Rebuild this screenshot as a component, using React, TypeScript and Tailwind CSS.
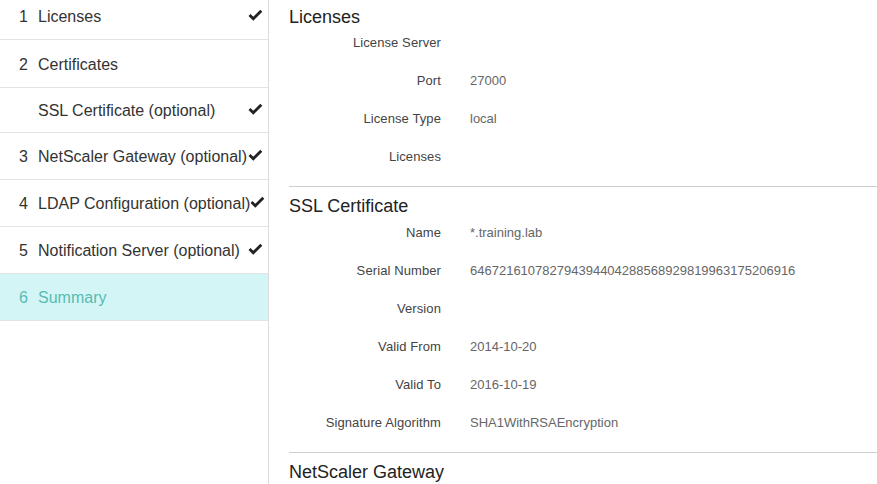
import React from 'react';

type Step = { num?: string; label: string; done?: boolean; active?: boolean; h: string };

const steps: Step[] = [
  { num: '1', label: 'Licenses', done: true, h: 'h-[47px]' },
  { num: '2', label: 'Certificates', h: 'h-[48px]' },
  { label: 'SSL Certificate (optional)', done: true, h: 'h-[45px]' },
  { num: '3', label: 'NetScaler Gateway (optional)', done: true, h: 'h-[47px]' },
  { num: '4', label: 'LDAP Configuration (optional)', done: true, h: 'h-[47px]' },
  { num: '5', label: 'Notification Server (optional)', done: true, h: 'h-[47px]' },
  { num: '6', label: 'Summary', active: true, h: 'h-[47px]' },
];

const licenses: [string, string][] = [
  ['License Server', ''],
  ['Port', '27000'],
  ['License Type', 'local'],
  ['Licenses', ''],
];

const ssl: [string, string][] = [
  ['Name', '*.training.lab'],
  ['Serial Number', '646721610782794394404288568929819963175206916'],
  ['Version', ''],
  ['Valid From', '2014-10-20'],
  ['Valid To', '2016-10-19'],
  ['Signature Algorithm', 'SHA1WithRSAEncryption'],
];

const Check = () => (
  <svg width="15" height="12" viewBox="0 0 15 12" className="shrink-0 -mt-[4px]">
    <path d="M1.5 6 L5.3 9.8 L13.3 1.8" fill="none" stroke="#222" strokeWidth="2.8" />
  </svg>
);

const Rows = ({ rows }: { rows: [string, string][] }) => (
  <div>
    {rows.map(([k, v]) => (
      <div key={k} className="flex h-[38px] pt-[5px] text-[13px] leading-[18px]">
        <div className="w-[152px] shrink-0 text-right text-[#444] tracking-[0.1px]">{k}</div>
        <div className="ml-[29px] text-[#666] whitespace-nowrap">{v}</div>
      </div>
    ))}
  </div>
);

export default function App() {
  return (
    <div
      className="flex h-[484px] w-[877px] overflow-hidden bg-white"
      style={{ fontFamily: '"Liberation Sans", Arial, sans-serif' }}
    >
      <aside className="w-[269px] shrink-0 border-r border-[#dcdcdc]">
        <div className="-mt-[7px]">
          {steps.map((s) => (
            <div
              key={s.label}
              className={`flex items-center border-b border-[#e4e4e4] pl-[19px] pr-[5px] pt-[2px] text-[16px] ${s.h} ${
                s.active ? 'bg-[#d4f5f6] text-[#56bdb2]' : 'text-[#333]'
              }`}
            >
              <span className="w-[19px] shrink-0">{s.num}</span>
              <span className="whitespace-nowrap">{s.label}</span>
              <span className="ml-auto flex">{s.done && <Check />}</span>
            </div>
          ))}
        </div>
      </aside>

      <main className="flex-1 pl-[20px] pt-[5px]">
        <h2 className="text-[18px] leading-6 text-[#222]">Licenses</h2>
        <Rows rows={licenses} />
        <div className="mt-[5px] border-t border-[#cfcfcf]" />
        <h2 className="mt-[7px] text-[18px] leading-[25px] text-[#222]">SSL Certificate</h2>
        <Rows rows={ssl} />
        <div className="mt-[5px] border-t border-[#cfcfcf]" />
        <h2 className="mt-[7px] text-[18px] leading-6 text-[#222]">NetScaler Gateway</h2>
      </main>
    </div>
  );
}
